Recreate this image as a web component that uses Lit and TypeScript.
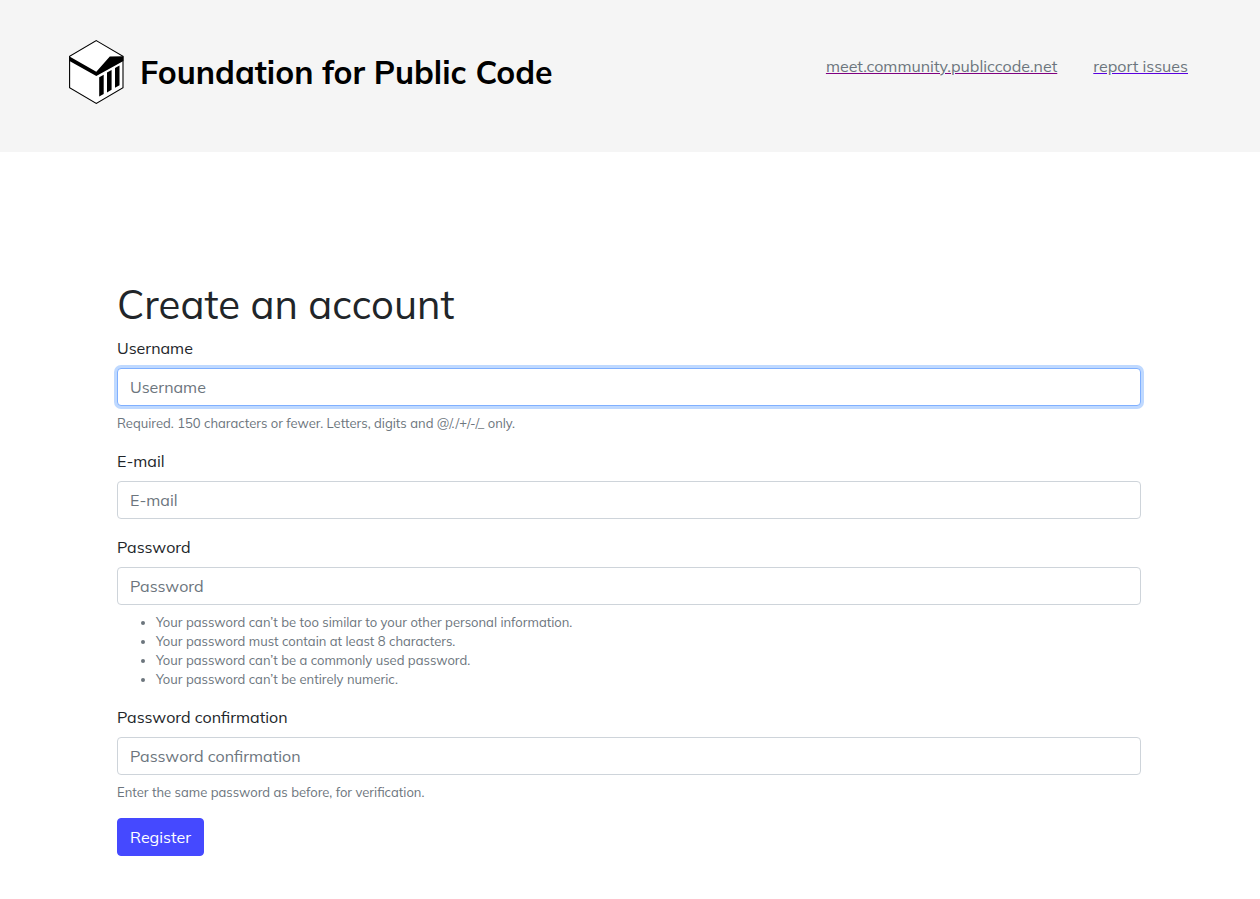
import { LitElement, html, css } from "lit";
import { customElement, query } from "lit/decorators.js";

@customElement("app-root")
export class AppRoot extends LitElement {
  static styles = css`
    :host {
      display: block;
      min-height: 100vh;
      background: #fff;
      color: #212529;
      font-family: Mulish, Muli, Lato, "Open Sans", sans-serif;
      font-size: 16px;
      line-height: 24px;
    }
    .header {
      display: flex;
      flex-wrap: wrap;
      justify-content: space-between;
      gap: 24px;
      padding: 40px 72px 48px 69px;
      background: #f5f5f5;
    }
    .brand {
      display: flex;
      align-items: center;
      gap: 16px;
      color: #000;
      font-size: 32px;
      font-weight: 700;
      line-height: 40px;
      text-decoration: none;
    }
    .logo {
      display: block;
      flex: none;
      width: 55px;
      height: 64px;
    }
    .nav {
      display: flex;
      flex-wrap: wrap;
      align-items: flex-start;
      gap: 36px;
      padding-top: 14px;
    }
    .link {
      color: #6c757d;
      text-decoration: underline;
      text-decoration-color: #5a00e0;
    }
    .visited {
      text-decoration-color: #800080;
    }
    .main {
      padding: 128px 119px 40px 117px;
    }
    .title {
      margin: 0 0 8px;
      font-size: 40px;
      font-weight: 400;
      line-height: 48px;
    }
    .group {
      margin-bottom: 16px;
    }
    .label {
      display: block;
      margin-bottom: 8px;
    }
    .input {
      display: block;
      box-sizing: border-box;
      width: 100%;
      height: 38px;
      margin: 0;
      padding: 6px 12px;
      border: 1px solid #ced4da;
      border-radius: 4px;
      background: #fff;
      color: #495057;
      font: inherit;
    }
    .input::placeholder {
      color: #6c757d;
      opacity: 1;
    }
    .input:focus {
      border-color: #80b0ff;
      outline: 0;
      box-shadow: 0 0 0 3px #bfd9ff;
    }
    .help {
      margin: 8px 0 0;
      color: #6c757d;
      font-size: 13px;
      line-height: 19px;
    }
    .rules {
      padding-left: 39px;
    }
    .button {
      height: 38px;
      margin: 0;
      padding: 6px 12px;
      border: 1px solid #4549ff;
      border-radius: 4px;
      background: #4549ff;
      color: #fff;
      font: inherit;
      cursor: pointer;
    }
  `;

  @query("#username") private username!: HTMLInputElement;

  firstUpdated() {
    this.username.focus();
  }

  render() {
    return html`
      <header class="header">
        <a class="brand" href="#home">
          <svg class="logo" viewBox="0 0 55 64" aria-hidden="true">
            <path d="M27.3 .6 54 16.2V47.8L27.3 63.4 .6 47.8V16.2Z" fill="#fff" stroke="#000" stroke-width="1.1" />
            <path d="M.5 16.5 27.3 31.700 40.800 16.500 54.400 16.200V21L27.300 36 .5 21Z" fill="#000" />
            <path d="M30.200 37.300 34.700 34.700V54L30.200 56.600ZM38 32.600 42.600 30V49.800L38 52.400ZM46 28 50.500 25.400V45.200L46 47.800Z" fill="#000" />
          </svg>
          <span>Foundation for Public Code</span>
        </a>
        <nav class="nav">
          <a class="link visited" href="#meet">meet.community.publiccode.net</a>
          <a class="link" href="#issues">report issues</a>
        </nav>
      </header>
      <main class="main">
        <h1 class="title">Create an account</h1>
        <form>
          <div class="group">
            <label class="label" for="username">Username</label>
            <input class="input" id="username" type="text" placeholder="Username" aria-describedby="username-help" />
            <p class="help" id="username-help">Required. 150 characters or fewer. Letters, digits and @/./+/-/_ only.</p>
          </div>
          <div class="group">
            <label class="label" for="email">E-mail</label>
            <input class="input" id="email" type="email" placeholder="E-mail" />
          </div>
          <div class="group">
            <label class="label" for="password">Password</label>
            <input class="input" id="password" type="password" placeholder="Password" aria-describedby="password-help" />
            <ul class="help rules" id="password-help">
              <li>Your password can’t be too similar to your other personal information.</li>
              <li>Your password must contain at least 8 characters.</li>
              <li>Your password can’t be a commonly used password.</li>
              <li>Your password can’t be entirely numeric.</li>
            </ul>
          </div>
          <div class="group">
            <label class="label" for="confirm">Password confirmation</label>
            <input class="input" id="confirm" type="password" placeholder="Password confirmation" aria-describedby="confirm-help" />
            <p class="help" id="confirm-help">Enter the same password as before, for verification.</p>
          </div>
          <button class="button" type="submit">Register</button>
        </form>
      </main>
    `;
  }
}
